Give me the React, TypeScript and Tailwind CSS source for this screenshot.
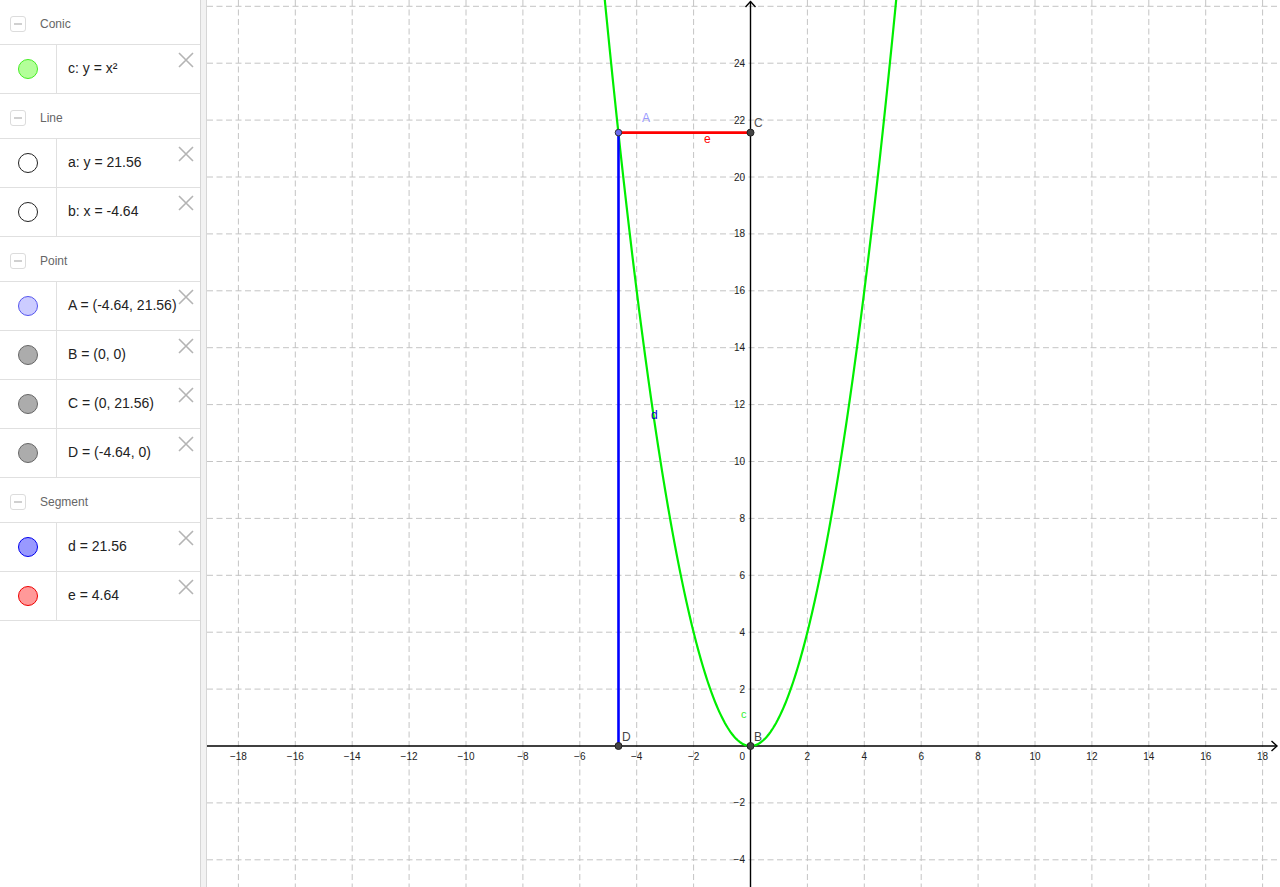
import React from 'react'

const OX = 750.5
const OY = 746
const S = 28.45

const px = (x: number) => OX + x * S
const py = (y: number) => OY - y * S

type Item = { text: React.ReactNode; fill: string; stroke: string }
type Group = { title: string; items: Item[] }

const groups: Group[] = [
  { title: 'Conic', items: [{ text: <>c: y = x²</>, fill: '#b3ff99', stroke: '#44ee22' }] },
  {
    title: 'Line',
    items: [
      { text: 'a: y = 21.56', fill: '#ffffff', stroke: '#222222' },
      { text: 'b: x = -4.64', fill: '#ffffff', stroke: '#222222' },
    ],
  },
  {
    title: 'Point',
    items: [
      { text: 'A = (-4.64, 21.56)', fill: '#ccccff', stroke: '#5555ee' },
      { text: 'B = (0, 0)', fill: '#acacac', stroke: '#666666' },
      { text: 'C = (0, 21.56)', fill: '#acacac', stroke: '#666666' },
      { text: 'D = (-4.64, 0)', fill: '#acacac', stroke: '#666666' },
    ],
  },
  {
    title: 'Segment',
    items: [
      { text: 'd = 21.56', fill: '#9999ff', stroke: '#0000ee' },
      { text: 'e = 4.64', fill: '#ff9999', stroke: '#ee0000' },
    ],
  },
]

function CloseIcon() {
  return (
    <svg width="16" height="16" viewBox="0 0 16 16" className="absolute right-[6px] top-[7px]">
      <path d="M1 1 L15 15 M15 1 L1 15" stroke="#b4b4b4" strokeWidth="1.6" fill="none" />
    </svg>
  )
}

function AlgebraPanel() {
  return (
    <div className="flex w-[200px] shrink-0 flex-col bg-white" style={{ fontFamily: '"Liberation Sans", Arial, sans-serif' }}>
      {groups.map((g) => (
        <div key={g.title}>
          <div className="flex h-[45px] items-center border-b border-[#e0e0e0] pl-[10px] pt-[3px]">
            <div className="flex h-[16px] w-[16px] items-center justify-center rounded-[3px] border border-[#dcdcdc]">
              <div className="h-[2px] w-[8px] bg-[#d0d0d0]" />
            </div>
            <span className="ml-[14px] text-[12px] text-[#666666]">{g.title}</span>
          </div>
          {g.items.map((it, i) => (
            <div key={i} className="relative flex h-[49px] border-b border-[#e0e0e0]">
              <div className="flex w-[57px] items-center justify-center border-r border-[#e0e0e0]">
                <div
                  className="h-[20px] w-[20px] rounded-full border"
                  style={{ backgroundColor: it.fill, borderColor: it.stroke }}
                />
              </div>
              <div className="flex items-center pb-[2px] pl-[11px] text-[14px] text-[#222222]">{it.text}</div>
              <CloseIcon />
            </div>
          ))}
        </div>
      ))}
    </div>
  )
}

function Graph() {
  const xs: number[] = []
  for (let k = -9; k <= 9; k++) xs.push(k * 2)
  const ys: number[] = []
  for (let k = -2; k <= 13; k++) ys.push(k * 2)

  let d = ''
  for (let x = -5.3; x <= 5.3001; x += 0.05) {
    d += (d ? ' L' : 'M') + px(x).toFixed(2) + ' ' + py(x * x).toFixed(2)
  }

  const ax = -4.64
  const ay = 21.56
  const font = '"Liberation Sans", Arial, sans-serif'

  return (
    <div className="relative flex-1 overflow-hidden bg-white">
      <svg width="1073" height="887" viewBox="207 0 1073 887" className="block">
        <g stroke="#c4c4c4" strokeWidth="1" strokeDasharray="6 3.5">
          {xs.map((x) => (x === 0 ? null : <line key={'v' + x} x1={px(x)} y1={0} x2={px(x)} y2={887} />))}
          {ys.map((y) => (y === 0 ? null : <line key={'h' + y} x1={207} y1={py(y)} x2={1280} y2={py(y)} />))}
        </g>

        <g stroke="#000" strokeWidth="1.4" fill="none">
          <line x1={207} y1={OY} x2={1277} y2={OY} />
          <line x1={OX} y1={887} x2={OX} y2={1.5} />
          <path d={`M1271.5 741 L1277 ${OY} L1271.5 751`} />
          <path d={`M${OX - 5} 7 L${OX} 1.5 L${OX + 5} 7`} />
        </g>

        <g fontFamily={font} fontSize="10" fill="#222">
          {xs.map((x) =>
            x === 0 ? null : (
              <text key={'tx' + x} x={px(x)} y={760} textAnchor="middle">
                {x < 0 ? '−' + Math.abs(x) : x}
              </text>
            ),
          )}
          <text x={745} y={760} textAnchor="end">0</text>
          {ys.map((y) =>
            y === 0 || y === 26 ? null : (
              <text key={'ty' + y} x={745} y={py(y) + 3.5} textAnchor="end">
                {y < 0 ? '−' + Math.abs(y) : y}
              </text>
            ),
          )}
        </g>

        <path d={d} stroke="#00ee00" strokeWidth="2.2" fill="none" />
        <line x1={px(ax)} y1={py(0)} x2={px(ax)} y2={py(ay)} stroke="#0000ff" strokeWidth="2.6" />
        <line x1={px(ax)} y1={py(ay)} x2={px(0)} y2={py(ay)} stroke="#ff0000" strokeWidth="2.6" />

        <g stroke="#222" strokeWidth="1">
          <circle cx={px(ax)} cy={py(ay)} r="3.3" fill="#6a6aee" stroke="#333" />
          <circle cx={px(0)} cy={py(ay)} r="3.5" fill="#444" />
          <circle cx={px(0)} cy={py(0)} r="3.5" fill="#444" />
          <circle cx={px(ax)} cy={py(0)} r="3.5" fill="#444" />
        </g>

        <g fontFamily={font} fontSize="12">
          <text x={642} y={122} fill="#9999ff">A</text>
          <text x={754} y={127} fill="#555">C</text>
          <text x={704} y={143} fill="#ff0000">e</text>
          <text x={651} y={419} fill="#0000cc">d</text>
          <text x={741} y={718} fill="#33ee33" fontSize="11">c</text>
          <text x={622} y={741} fill="#444">D</text>
          <text x={754} y={741} fill="#444">B</text>
        </g>
      </svg>
    </div>
  )
}

export default function App() {
  return (
    <div className="flex h-[887px] w-[1280px] overflow-hidden bg-white">
      <AlgebraPanel />
      <div className="flex w-[7px] shrink-0 border-l border-r border-[#d6d6d6] bg-[#f2f2f2]" />
      <Graph />
    </div>
  )
}
